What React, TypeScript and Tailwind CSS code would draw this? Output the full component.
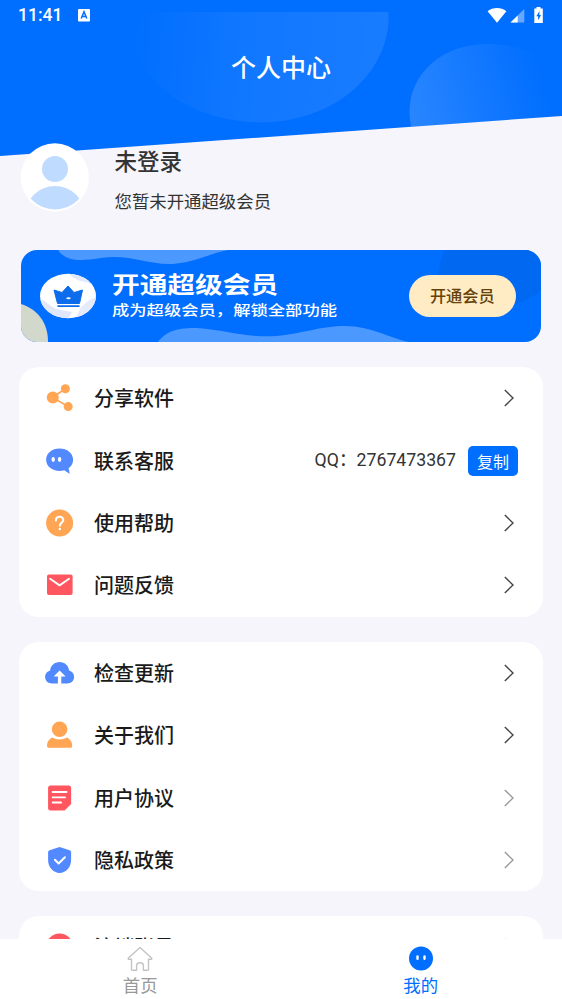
import React from "react";

interface MenuItem {
  label: string;
  icon: React.ReactNode;
  /** 화살표 색을 연하게 표시 */
  light?: boolean;
  right?: React.ReactNode;
}

/** 상단 파란 배경 */
function HeaderBackground() {
  return (
    <svg
      className="absolute left-0 top-0"
      width="562"
      height="157"
      viewBox="0 0 562 157"
      fill="none"
    >
      <defs>
        <linearGradient id="blobA" x1="389" y1="60" x2="130" y2="40" gradientUnits="userSpaceOnUse">
          <stop stopColor="#fff" stopOpacity="0.1" />
          <stop offset="0.6" stopColor="#fff" stopOpacity="0.06" />
          <stop offset="1" stopColor="#fff" stopOpacity="0" />
        </linearGradient>
        <linearGradient id="blobB" x1="409" y1="110" x2="545" y2="75" gradientUnits="userSpaceOnUse">
          <stop stopColor="#fff" stopOpacity="0.16" />
          <stop offset="1" stopColor="#fff" stopOpacity="0" />
        </linearGradient>
        <clipPath id="slope">
          <path d="M0 0H562V116L0 156Z" />
        </clipPath>
      </defs>
      <g clipPath="url(#slope)">
        <path d="M0 0H562V157H0Z" fill="#006eff" />
        <path d="M132 12H388.500C391 75 332 122 262 122.500C190 122 132 80 132 30Z" fill="url(#blobA)" />
        <path d="M412 130C400 85 433 44 488 44C530 44 562 65 575 90V130Z" fill="url(#blobB)" />
      </g>
    </svg>
  );
}

function StatusBar() {
  return (
    <div className="relative flex h-8 items-center pl-[18px] pr-[18px] text-white">
      <span className="font-['Roboto',sans-serif] text-[17.5px] font-medium leading-none">
        11:41
      </span>
      <svg className="ml-4 -mt-px" width="12" height="13" viewBox="0 0 12 13">
        <rect width="12" height="12.500" rx="1" fill="#fff" />
        <path d="M3.200 9.500L6 2.800L8.800 9.500M4.200 7.400H7.800" stroke="#006eff" strokeWidth="1.500" fill="none" />
      </svg>
      <svg className="ml-auto -mt-px" width="57" height="18" viewBox="0 0 57 18">
        <path d="M.600 4.200C6-.1 14-.1 19.400 4.200L10 15.800Z" fill="#fff" />
        <path d="M37.300 2V15.500H23.500Z" fill="#fff" opacity="0.4" />
        <path d="M30.700 8.500V15.500H23.500Z" fill="#fff" />
        <path d="M49.500 0h4v1.500h2.300V16H47.300V1.500h2.200z" fill="#fff" />
        <path d="M52.600 4L49.300 9.300h1.800v4l3-5.300H52.300z" fill="#006eff" />
      </svg>
    </div>
  );
}

function Profile() {
  return (
    <div className="relative flex pl-5 pt-[60px]">
      <svg className="shrink-0" width="70" height="70" viewBox="0 0 70 70">
        <defs>
          <clipPath id="avatar">
            <circle cx="35" cy="34" r="32.500" />
          </clipPath>
        </defs>
        <circle cx="34.800" cy="34.500" r="34.200" fill="#fff" />
        <circle cx="35" cy="26" r="13" fill="#bfdbff" />
        <circle cx="35" cy="73" r="30" fill="#bfdbff" clipPath="url(#avatar)" />
      </svg>
      <div className="ml-[24.5px]">
        <h2 className="mt-[5px] text-[22.5px] font-medium leading-6 text-[#333]">
          未登录
        </h2>
        <p className="mt-[17px] text-[17.4px] leading-6 text-[#333]">
          您暂未开通超级会员
        </p>
      </div>
    </div>
  );
}

function VipBanner() {
  return (
    <div className="relative mx-[21px] mt-[37px] flex h-[92px] items-center overflow-hidden rounded-[16px] bg-[#006eff]">
      <svg className="absolute left-0 top-0" width="520" height="92" viewBox="0 0 520 92">
        <path d="M37 0C45 12 60 11 80 8C110 4 125 15 152 14C175 12 190 3 207 0Z" fill="#4b98ff" />
        <path d="M137 92C146 80 158 78 176 78C205 80 225 88 255 86C285 83 300 76 324 76C350 76 368 88 388 92Z" fill="#4b98ff" />
        <path d="M424 0C414 22 415 44 427 58C455 68 498 59 520 40V0Z" fill="#0068f1" />
        <path d="M0 54C16 59 27 72 27 92H0Z" fill="#d3d8cd" />
      </svg>
      <svg className="relative ml-[19px] shrink-0" width="56" height="46" viewBox="0 0 56 46">
        <defs>
          <clipPath id="badge">
            <ellipse cx="28" cy="23" rx="28" ry="22.200" />
          </clipPath>
        </defs>
        <g clipPath="url(#badge)">
          <path d="M0 0H56V46H0Z" fill="#fff" />
          <path d="M28 0C33 5 38 8 46 9L58 14V0Z" fill="#dfe8fc" />
          <path d="M0 26C6 28 10 33 16 36L32 39L28 46H0Z" fill="#e1e7fb" />
          <path d="M41 34C46 31 49 25 56 25V44H36Z" fill="#e6ebfc" />
        </g>
        <path d="M14 17L22 19.500L28 13L34 19.500L42.500 17L39.500 30.500H17.500Z" fill="#0d6cec" stroke="#0d6cec" strokeLinejoin="round" />
        <path d="M17.500 33.200H39.500" stroke="#0d6cec" strokeWidth="1.800" />
        <ellipse cx="28.500" cy="25.200" rx="2.200" ry="1" fill="#fff" />
      </svg>
      <div className="relative ml-4 w-[260px] whitespace-nowrap text-white">
        <div className="relative -top-px origin-left scale-x-[1.23] text-[22.500px] font-bold leading-[26px]">
          开通超级会员
        </div>
        <div className="origin-left scale-x-[1.22] text-[14.200px] font-medium leading-6">
          成为超级会员，解锁全部功能
        </div>
      </div>
      <button className="absolute right-[25px] top-[25px] h-[42px] w-[107.5px] rounded-full bg-[#ffecc5] pb-px text-[16.200px] font-medium text-[#66420a]">
        开通会员
      </button>
    </div>
  );
}

function Arrow({ light = false }: { light?: boolean }) {
  return (
    <svg className="mr-[4.5px]" width="10" height="18" viewBox="0 0 10 18" fill="none">
      <path
        d="M.800 1L9 9L.800 17"
        stroke={light ? "#999" : "#444"}
        strokeWidth="1.400"
      />
    </svg>
  );
}

/** 메뉴 아이콘 공통 래퍼 */
function Icon({ children }: { children: React.ReactNode }) {
  return (
    <svg className="shrink-0" width="32" height="32" viewBox="0.400 0 32 32" fill="none">
      {children}
    </svg>
  );
}

const SERVICE_ITEMS: MenuItem[] = [
  {
    label: "分享软件",
    icon: (
      <Icon>
        <path d="M22 6.500L9 15.500L24.500 24.500" stroke="#ffa553" strokeWidth="1.700" />
        <circle cx="9.200" cy="15.500" r="6" fill="#ffa553" />
        <circle cx="21.800" cy="6.800" r="4.500" fill="#ffa553" />
        <circle cx="24.600" cy="24.600" r="4.500" fill="#ffa553" />
      </Icon>
    ),
  },
  {
    label: "联系客服",
    icon: (
      <Icon>
        <path d="M16 3.500C8.500 3.500 2.500 8.300 2.500 14.800S8.500 26 16 26c1.600 0 3.200-.2 4.600-.7L25.500 28.500C26 28.700 26.200 28.400 26 28L25 23.200C27.900 21 29.500 18.200 29.500 14.800C29.500 8.300 23.500 3.500 16 3.500Z" fill="#5389ff" />
        <ellipse cx="9.600" cy="14.500" rx="1.700" ry="2.400" fill="#fff" />
        <ellipse cx="16" cy="14.500" rx="1.700" ry="2.400" fill="#fff" />
      </Icon>
    ),
    right: (
      <div className="flex items-center">
        <span className="font-['Roboto','Noto_Sans_CJK_SC',sans-serif] text-[17.700px] text-[#333]">
          QQ：2767473367
        </span>
        <button className="ml-3 h-[30px] w-[50px] rounded-[5px] bg-[#006eff] text-[16px] leading-none text-white">
          复制
        </button>
      </div>
    ),
  },
  {
    label: "使用帮助",
    icon: (
      <Icon>
        <circle cx="16" cy="16" r="13.500" fill="#ffa553" />
        <path d="M12.300 13.400c0-4.800 7.400-4.600 7.400-.4 0 2.600-3.500 3-3.500 5.700" stroke="#fff" strokeWidth="2.100" strokeLinecap="round" />
        <circle cx="16.200" cy="21.900" r="1.250" fill="#fff" />
      </Icon>
    ),
  },
  {
    label: "问题反馈",
    icon: (
      <Icon>
        <rect x="3.400" y="5.500" width="25.600" height="20.500" rx="2" fill="#ff5660" />
        <path d="M6.500 9.800L16 16.400L25.500 9.800" stroke="#fff" strokeWidth="1.900" strokeLinecap="round" strokeLinejoin="round" />
      </Icon>
    ),
  },
];

const ABOUT_ITEMS: MenuItem[] = [
  {
    label: "检查更新",
    icon: (
      <Icon>
        <path d="M8.500 26.500C4.500 26.500 1.500 23.700 1.500 20C1.500 16.800 3.700 14.300 6.500 13.500C7 8.500 11 5 16 5S25 8.500 25.500 13.500C28.500 14.300 30.500 16.800 30.500 20C30.500 23.700 27.500 26.500 23.500 26.500Z" fill="#5389ff" />
        <path d="M16 13.500L22 19.500H17.700V27H14.300V19.500H10Z" fill="#fff" />
      </Icon>
    ),
  },
  {
    label: "关于我们",
    icon: (
      <Icon>
        <circle cx="16" cy="10.300" r="7.800" fill="#ffa553" />
        <path d="M8.500 18.500C13 21 19 21 23.500 18.500C26.500 20 28.600 23 28.600 26.500C28.600 28 28 28.800 26.600 28.800H5.400C4 28.800 3.400 28 3.400 26.500C3.400 23 5.500 20 8.500 18.500Z" fill="#ffa553" />
      </Icon>
    ),
  },
  {
    label: "用户协议",
    light: true,
    icon: (
      <Icon>
        <path d="M7 3.500H25A2.500 2.500 0 0 1 27.500 6V22L21 28.500H7A2.500 2.500 0 0 1 4.500 26V6A2.500 2.500 0 0 1 7 3.500Z" fill="#ff5660" />
        <path d="M9 10H23M9 15.300H21.500M9 20.500H17.500" stroke="#fff" strokeWidth="1.800" strokeLinecap="round" />
      </Icon>
    ),
  },
  {
    label: "隐私政策",
    light: true,
    icon: (
      <Icon>
        <path d="M16 3L26 6.200Q27.500 6.700 27.500 8V16C27.500 23 22.500 28.800 16 29C9.500 28.800 4.500 23 4.500 16V8Q4.500 6.700 6 6.200Z" fill="#5389ff" />
        <path d="M11.300 15.800L15 19.500L21.300 13.200" stroke="#fff" strokeWidth="2" strokeLinecap="round" strokeLinejoin="round" />
      </Icon>
    ),
  },
];

const ACCOUNT_ITEMS: MenuItem[] = [
  {
    label: "注销账号",
    light: true,
    icon: (
      <Icon>
        <circle cx="16" cy="16" r="13.500" fill="#ff5660" />
      </Icon>
    ),
  },
];

function MenuCard({ items }: { items: MenuItem[] }) {
  return (
    <div className="mx-[19px] mb-[25px] rounded-[20px] bg-white">
      {items.map((item) => (
        <div key={item.label} className="flex h-[62.4px] items-center pl-[25px] pr-[25px]">
          {item.icon}
          <span className="ml-[18px] flex-1 text-[20px] font-medium leading-none text-[#1a1a1a]">
            {item.label}
          </span>
          {item.right ?? <Arrow light={item.light} />}
        </div>
      ))}
    </div>
  );
}

function TabBar() {
  return (
    <div className="flex h-[60px] shrink-0 bg-white pr-px text-[17.400px] leading-6">
      <div className="flex flex-1 flex-col items-center pt-[7px] text-[#999]">
        <svg width="26" height="26" viewBox="0 0 26 26" fill="none">
          <path d="M13 1.500L1.200 12.200Q1 13.200 2 13.200H4.500V23.500Q4.500 24.300 5.300 24.300H9.600V19.500C9.600 15.800 16.400 15.800 16.400 19.500V24.300H20.700Q21.500 24.300 21.500 23.500V13.200H24Q25 13.200 24.800 12.200Z" stroke="#c4c4c4" strokeWidth="1.400" strokeLinejoin="round" />
        </svg>
        <span className="mt-px">首页</span>
      </div>
      <div className="flex flex-1 flex-col items-center pt-[7px] text-[#006eff]">
        <svg width="26" height="26" viewBox="0 0 26 26">
          <circle cx="13" cy="12.500" r="12" fill="#006eff" />
          <rect x="8.300" y="9.300" width="2.400" height="4.600" rx="1.200" fill="#fff" />
          <rect x="15.300" y="9.300" width="2.400" height="4.600" rx="1.200" fill="#fff" />
        </svg>
        <span className="mt-px">我的</span>
      </div>
    </div>
  );
}

export default function App() {
  return (
    <div className="flex h-[999px] w-[562px] flex-col overflow-hidden bg-[#f5f5fb] font-['Noto_Sans_CJK_SC',sans-serif]">
      <div className="relative min-h-0 flex-1 overflow-hidden">
        <HeaderBackground />
        <StatusBar />
        <h1 className="relative mb-px mt-[19px] text-center text-[25px] font-medium leading-[31px] text-white">
          个人中心
        </h1>
        <Profile />
        <VipBanner />
        <div className="pt-[25px]">
          <MenuCard items={SERVICE_ITEMS} />
          <MenuCard items={ABOUT_ITEMS} />
          <MenuCard items={ACCOUNT_ITEMS} />
        </div>
      </div>
      <TabBar />
    </div>
  );
}
